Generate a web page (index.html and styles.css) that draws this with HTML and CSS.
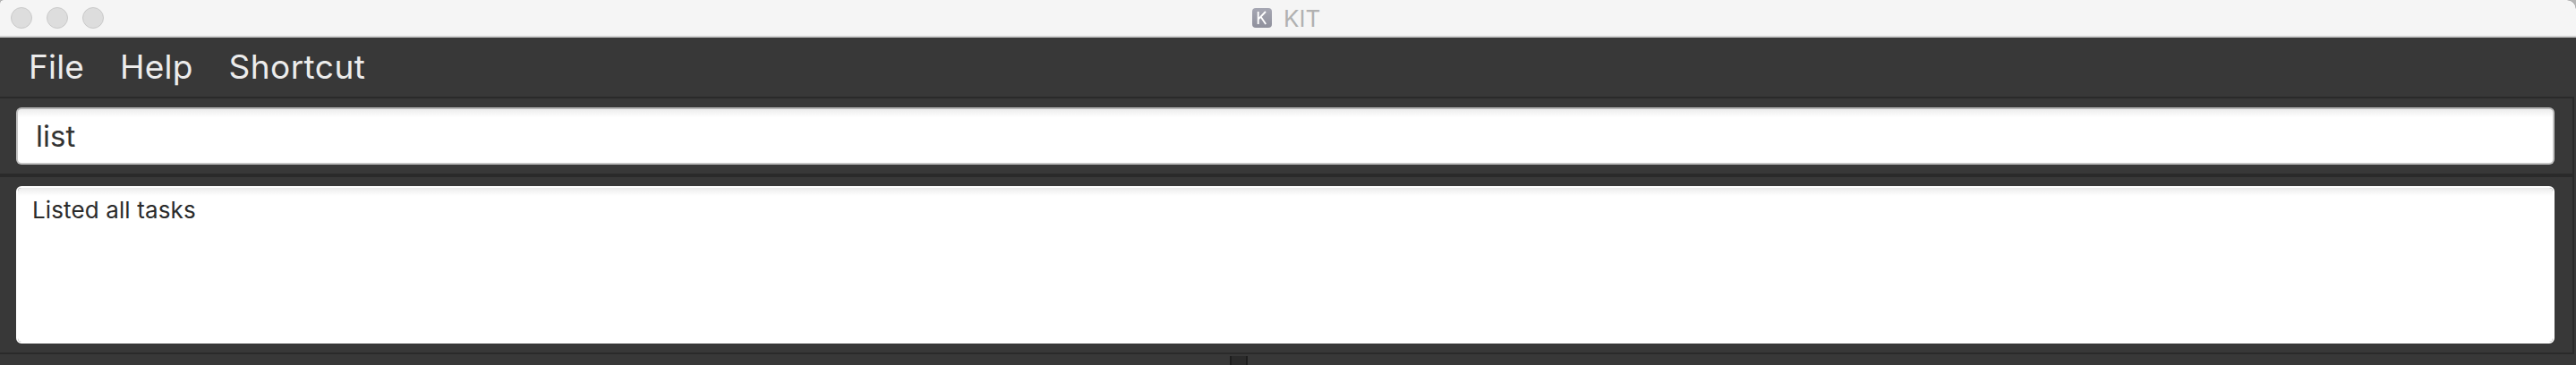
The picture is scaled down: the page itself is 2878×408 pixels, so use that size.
FILE: index.html
```html
<!DOCTYPE html>
<html lang="en">
<head>
<meta charset="utf-8">
<title>KIT</title>
<link rel="stylesheet" href="styles.css">
</head>
<body>
<div class="window">
  <header class="titlebar">
    <div class="controls"><span class="dot"></span><span class="dot"></span><span class="dot"></span></div>
    <div class="title">
      <svg class="app-icon" width="22" height="22" viewBox="0 0 22 22">
        <defs><linearGradient id="tile" x1="0" y1="0" x2="0" y2="1"><stop offset="0" stop-color="#a6a7b3"/><stop offset="1" stop-color="#8f909c"/></linearGradient></defs>
        <rect width="22" height="22" rx="4" fill="url(#tile)"/>
        <path d="M6.7 4v14M15 4 7.2 12.2M9.6 9.8 15.2 18" fill="none" stroke="#ffffff" stroke-width="1.9"/>
      </svg>
      <span class="title-text">KIT</span>
    </div>
  </header>
  <nav class="menubar">
    <span class="menu file">File</span>
    <span class="menu help">Help</span>
    <span class="menu shortcut">Shortcut</span>
  </nav>
  <main class="panes">
    <section class="command-pane"><div class="command-box"><span class="command-text">list</span></div></section>
    <section class="result-pane"><div class="result-box"><span class="result-text">Listed all tasks</span></div></section>
  </main>
  <div class="split"><div class="divider"></div></div>
</div>
</body>
</html>
```
FILE: styles.css
```css
* { box-sizing: border-box; }
body { margin: 0; background: #b4b4b4; font-family: Inter, "Liberation Sans", sans-serif; }
.window { width: 2878px; height: 408px; overflow: hidden; display: flex; flex-direction: column; background: #383838; border-radius: 4px 10px 0 0; }
.titlebar { height: 42px; flex: none; display: grid; grid-template-columns: 1399px auto; background: #f5f5f5; border-bottom: 2px solid #d0d0d0; }
.controls { display: flex; gap: 16px; padding: 8px 0 0 12px; }
.dot { width: 24px; height: 24px; border-radius: 50%; background: #dddddd; border: 1px solid #cacaca; }
.title { display: flex; padding-top: 9px; }
.title-text { margin-left: 13px; margin-top: -4px; font-size: 26px; line-height: 32px; color: #b1b1b1; }
.menubar { height: 66px; flex: none; display: flex; padding-left: 32px; color: #ececec; font-size: 37px; line-height: 66px; }
.menu { white-space: nowrap; }
.file { width: 102px; letter-spacing: 0.2px; }
.help { width: 121.5px; letter-spacing: 0.2px; }
.shortcut { letter-spacing: 0.45px; }
.panes { width: 2876px; height: 288px; flex: none; border: 2px solid #2a2a2a; border-left: 0; }
.command-pane { height: 88px; padding: 10px 20px 10px 18px; border-bottom: 4px solid #2a2a2a; }
.command-box { height: 64px; border: 2px solid #c4c4c4; border-top-color: #b5b5b5; border-radius: 6px; padding-left: 20px; background: linear-gradient(#ececec, #fff 9px); color: #333; font-size: 33px; line-height: 60px; }
.result-pane { padding: 10px 20px 10px 18px; }
.result-box { height: 176px; border: 2px solid #fff; border-radius: 6px; padding: 9px 0 0 16px; background: linear-gradient(#ececec, #fff 9px) padding-box; color: #2b2b2b; font-size: 26px; line-height: 32px; letter-spacing: 0.12px; }
.split { flex: 1; padding: 2px 0 0 1374px; }
.divider { width: 20px; height: 10px; background: #2b2b2b; border: solid #1e1e1e; border-width: 0 2px; }
```
